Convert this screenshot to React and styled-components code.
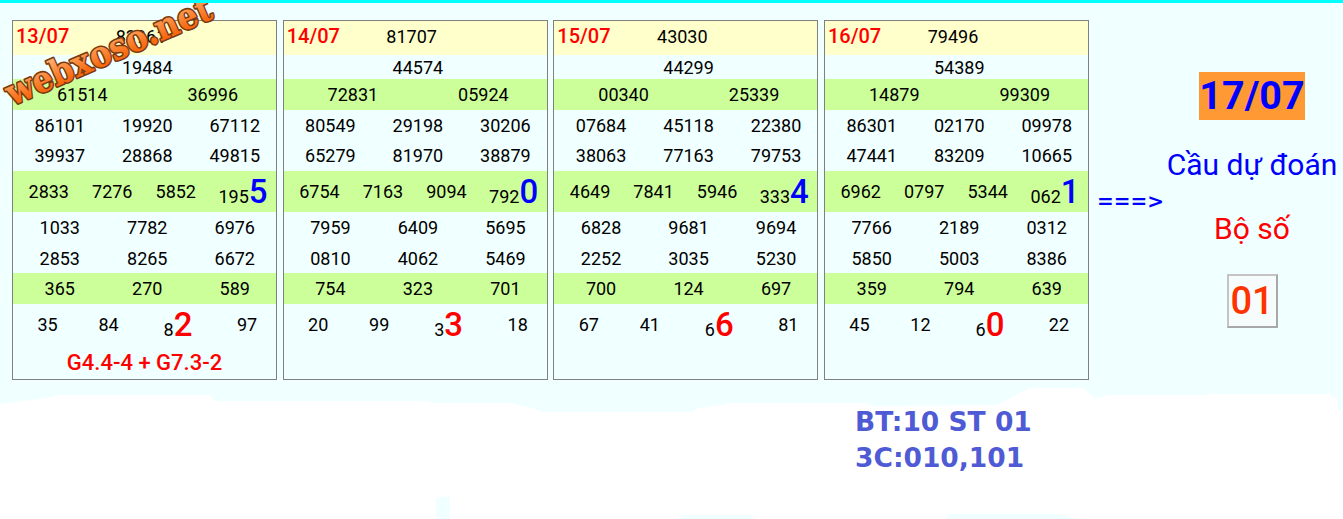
import React from 'react';
import styled, { createGlobalStyle } from 'styled-components';

const GlobalStyle = createGlobalStyle`
  html, body {
    margin: 0;
    padding: 0;
    background: #F0FFFF;
    font-family: Roboto, "Liberation Sans", sans-serif;
  }
`;

const Page = styled.div`
  position: relative;
  width: 1343px;
  height: 519px;
  overflow: hidden;
  border-top: 3px solid #00FFFF;
  box-sizing: border-box;
`;

const Backdrop = styled.svg`
  position: absolute;
  left: 0;
  top: -3px;
  z-index: 0;
`;

const Main = styled.div`
  position: relative;
  z-index: 1;
  display: flex;
  padding: 17px 0 0 12px;
`;

const Cards = styled.div`
  display: flex;
  gap: 5.67px;
`;

const Card = styled.div`
  width: 265px;
  height: 360px;
  box-sizing: border-box;
  border: 1px solid #808080;
  display: flex;
  flex-direction: column;
`;

const tones = { yellow: '#FFFFCC', green: '#CCFF99', plain: 'transparent' };

const Row = styled.div`
  height: ${p => p.$height}px;
  flex: none;
  display: grid;
  grid-template-columns: ${p => p.$cols};
  padding: ${p => p.$padding};
  box-sizing: border-box;
  align-items: center;
  justify-items: center;
  background: ${p => tones[p.$tone || 'plain']};
  font-size: 18px;
  color: #000;
`;

const HeaderRow = styled(Row)`
  padding-bottom: 4px;
  justify-items: start;
`;

const DateText = styled.span`
  color: #FF0000;
  font-weight: 500;
  font-size: 20px;
  padding-left: 3px;
`;

const Centered = styled.span`
  justify-self: center;
`;

const Tail = styled.span`
  white-space: nowrap;
`;

const BigDigit = styled.span`
  font-size: 33px;
  font-weight: 500;
  color: ${p => p.$color};
`;

const Note = styled.div`
  flex: 1;
  display: flex;
  align-items: center;
  justify-content: center;
  color: #FF0000;
  font-weight: 500;
  font-size: 22px;
`;

const Arrow = styled.div`
  align-self: center;
  margin: 2px 5px 0 8px;
  color: #0000FF;
  font-family: "DejaVu Sans", sans-serif;
  font-weight: bold;
  font-size: 20px;
  white-space: nowrap;
`;

const Forecast = styled.div`
  width: 166px;
  display: flex;
  flex-direction: column;
  align-items: center;
  padding-top: 52px;
`;

const TargetDate = styled.div`
  background: #FF9933;
  color: #0000FF;
  font-weight: 700;
  font-size: 39.5px;
  line-height: 48px;
`;

const ForecastLabel = styled.div`
  font-size: 30px;
  line-height: 34px;
  color: ${p => p.$color};
  margin-top: ${p => p.$top}px;
  white-space: nowrap;
`;

const PairBox = styled.div`
  margin-top: 28px;
  width: 51px;
  height: 54px;
  box-sizing: border-box;
  border: 2px solid;
  border-color: #c4c4c4 #a8a8a8 #a8a8a8 #c4c4c4;
  background: #F6FCFC;
  display: flex;
  align-items: center;
  justify-content: center;
  color: #FF3300;
  font-weight: 500;
  font-size: 38px;
`;

const Summary = styled.div`
  position: relative;
  z-index: 1;
  margin: 24px 0 0 855px;
  color: #4F5BD5;
  font-family: "DejaVu Sans", sans-serif;
  font-weight: bold;
  font-size: 26.5px;
  line-height: 36px;
`;

const Watermark = styled.svg`
  position: absolute;
  left: 0;
  top: -3px;
  z-index: 2;
  pointer-events: none;
`;

const WatermarkText = styled.text`
  font-family: "DejaVu Serif", serif;
  font-weight: bold;
  font-size: 36px;
  paint-order: stroke;
  stroke-linejoin: round;
`;

const days = [
  {
    date: '13/07', g1: '83961', g2: '19484', g3: ['61514', '36996'],
    g4: [['86101', '19920', '67112'], ['39937', '28868', '49815']],
    g5: ['2833', '7276', '5852', '195', '5'],
    g6: [['1033', '7782', '6976'], ['2853', '8265', '6672']],
    g7: ['365', '270', '589'], g8: ['35', '84', '8', '2', '97'],
    note: 'G4.4-4 + G7.3-2',
  },
  {
    date: '14/07', g1: '81707', g2: '44574', g3: ['72831', '05924'],
    g4: [['80549', '29198', '30206'], ['65279', '81970', '38879']],
    g5: ['6754', '7163', '9094', '792', '0'],
    g6: [['7959', '6409', '5695'], ['0810', '4062', '5469']],
    g7: ['754', '323', '701'], g8: ['20', '99', '3', '3', '18'],
  },
  {
    date: '15/07', g1: '43030', g2: '44299', g3: ['00340', '25339'],
    g4: [['07684', '45118', '22380'], ['38063', '77163', '79753']],
    g5: ['4649', '7841', '5946', '333', '4'],
    g6: [['6828', '9681', '9694'], ['2252', '3035', '5230']],
    g7: ['700', '124', '697'], g8: ['67', '41', '6', '6', '81'],
  },
  {
    date: '16/07', g1: '79496', g2: '54389', g3: ['14879', '99309'],
    g4: [['86301', '02170', '09978'], ['47441', '83209', '10665']],
    g5: ['6962', '0797', '5344', '062', '1'],
    g6: [['7766', '2189', '0312'], ['5850', '5003', '8386']],
    g7: ['359', '794', '639'], g8: ['45', '12', '6', '0', '22'],
  },
];

const THREE = '87.5px 87.5px 87.5px';

const Triple = ({ values, height, tone, lift = 0 }) => (
  <Row $cols={THREE} $padding={`0 0 ${lift}px 3px`} $height={height} $tone={tone}>
    {values.map((v, i) => <span key={i}>{v}</span>)}
  </Row>
);

const DayCard = ({ day }) => (
  <Card>
    <HeaderRow $cols="69px 118px 1fr" $padding="0" $height={34} $tone="yellow">
      <DateText>{day.date}</DateText>
      <Centered>{day.g1}</Centered>
    </HeaderRow>
    <Row $cols={THREE} $padding="0 0 0 3px" $height={24}>
      <span />
      <span>{day.g2}</span>
    </Row>
    <Row $cols="130.5px 130.5px" $padding="0 0 1px 4px" $height={31} $tone="green">
      {day.g3.map((v, i) => <span key={i}>{v}</span>)}
    </Row>
    <Triple values={day.g4[0]} height={31} />
    <Triple values={day.g4[1]} height={30} lift={2} />
    <Row $cols="63.5px 63.5px 63.5px 71px" $padding="0 0 0 4px" $height={41} $tone="green">
      <span>{day.g5[0]}</span>
      <span>{day.g5[1]}</span>
      <span>{day.g5[2]}</span>
      <Tail>{day.g5[3]}<BigDigit $color="#0000FF">{day.g5[4]}</BigDigit></Tail>
    </Row>
    <Triple values={day.g6[0]} height={31} />
    <Triple values={day.g6[1]} height={30} />
    <Triple values={day.g7} height={31} tone="green" />
    <Row $cols="61px 61px 78px 60px" $padding="0 0 0 4px" $height={41}>
      <span>{day.g8[0]}</span>
      <span>{day.g8[1]}</span>
      <Tail>{day.g8[2]}<BigDigit $color="#FF0000">{day.g8[3]}</BigDigit></Tail>
      <span>{day.g8[4]}</span>
    </Row>
    <Note>{day.note}</Note>
  </Card>
);

const whiteEdge = [
  '0,404 13,402 32,400 50,397 58,395 210,395 215,401 427,401 433,403 510,403',
  '533,408 542,412 692,412 697,408 723,405 727,403 868,403 872,406 997,405',
  '1020,393 1030,388 1083,388 1095,398 1110,395 1208,395 1210,394 1330,394',
  '1338,400 1338,410 1343,410 1343,519 0,519',
].join(' ');

export default function App() {
  return (
    <Page>
      <GlobalStyle />
      <Backdrop width="1343" height="519">
        <polygon points={whiteEdge} fill="#FFFFFF" />
        <rect x="436" y="497" width="14" height="22" fill="#F0FFFF" />
        <polygon points="677,519 683,515 750,515 756,519" fill="#F0FFFF" />
        <polygon points="947,519 947,514 1060,514 1078,519" fill="#F0FFFF" />
      </Backdrop>
      <Main>
        <Cards>
          {days.map(day => <DayCard key={day.date} day={day} />)}
        </Cards>
        <Arrow>===&gt;</Arrow>
        <Forecast>
          <TargetDate>17/07</TargetDate>
          <ForecastLabel $color="#0000FF" $top={28}>Cầu dự đoán</ForecastLabel>
          <ForecastLabel $color="#FF0000" $top={30}>Bộ số</ForecastLabel>
          <PairBox>01</PairBox>
        </Forecast>
      </Main>
      <Summary>
        BT:10 ST 01<br />
        3C:010,101
      </Summary>
      <Watermark width="300" height="160">
        <defs>
          <linearGradient id="wm" x1="0" y1="0" x2="0" y2="1">
            <stop offset="0.15" stopColor="#FFB070" />
            <stop offset="0.75" stopColor="#F86A10" />
          </linearGradient>
        </defs>
        <WatermarkText
          transform="translate(12 106) rotate(-23.5)"
          textLength="221"
          lengthAdjust="spacingAndGlyphs"
          fill="url(#wm)"
          stroke="#7A3A10"
          strokeWidth="3.2"
        >
          webxoso.net
        </WatermarkText>
      </Watermark>
    </Page>
  );
}
